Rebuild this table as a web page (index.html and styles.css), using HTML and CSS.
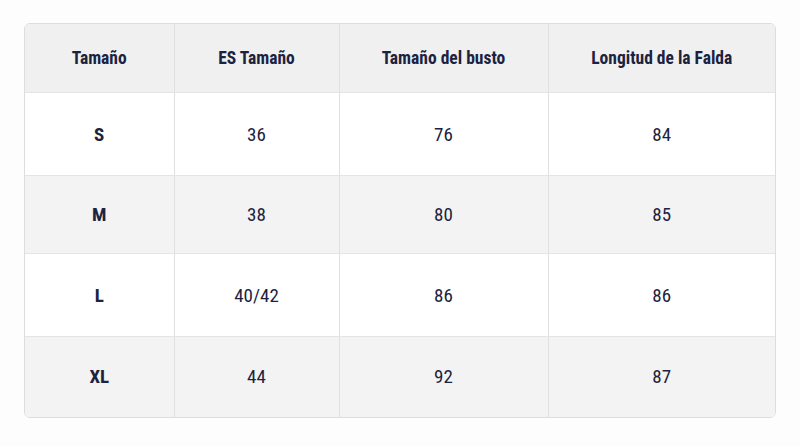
FILE: index.html
```html
<!DOCTYPE html>
<html lang="es">
<head>
<meta charset="utf-8">
<link rel="stylesheet" href="styles.css">
</head>
<body>
<div class="page">
  <div class="card">
    <table class="sizes">
      <colgroup>
        <col class="c1"><col class="c2"><col class="c3"><col class="c4">
      </colgroup>
      <thead>
        <tr class="head">
          <th>Tamaño</th><th>ES Tamaño</th><th>Tamaño del busto</th><th>Longitud de la Falda</th>
        </tr>
      </thead>
      <tbody>
        <tr class="r1"><th>S</th><td>36</td><td>76</td><td>84</td></tr>
        <tr class="r2 alt"><th>M</th><td>38</td><td>80</td><td>85</td></tr>
        <tr class="r3"><th>L</th><td>40/42</td><td>86</td><td>86</td></tr>
        <tr class="r4 alt"><th>XL</th><td>44</td><td>92</td><td>87</td></tr>
      </tbody>
    </table>
  </div>
</div>
</body>
</html>
```

FILE: styles.css
```css
html, body {
  margin: 0;
  padding: 0;
  background: #fdfdfd;
}
.page {
  padding: 23px 24px 0 24px;
}
.card {
  width: 750px;
  border: 1px solid #dddddd;
  border-radius: 6px;
  overflow: hidden;
  background: #ffffff;
}
.sizes {
  width: 100%;
  border-collapse: collapse;
  table-layout: fixed;
  font-family: "Roboto Condensed", Roboto, "Liberation Sans", sans-serif;
  font-stretch: 80%;
  color: #1b2340;
}
.c1 { width: 149px; }
.c2 { width: 165px; }
.c3 { width: 209px; }
.c4 { width: auto; }
.sizes th, .sizes td {
  text-align: center;
  vertical-align: middle;
  border-right: 1px solid #e0e0e0;
  border-bottom: 1px solid #e4e4e4;
  padding: 0;
}
.sizes th:last-child, .sizes td:last-child {
  border-right: none;
}
.sizes tbody tr:last-child th, .sizes tbody tr:last-child td {
  border-bottom: none;
}
.head th {
  background: #f0f0f0;
  font-size: 17.5px;
  font-weight: 700;
  height: 68px;
}
.sizes tbody th {
  font-size: 19px;
  font-weight: 700;
}
.sizes tbody td {
  font-size: 19px;
  font-weight: 400;
  font-stretch: 84%;
}
.r1 { height: 83px; }
.r2 { height: 78px; }
.r3 { height: 83px; }
.r4 { height: 80px; }
.alt th, .alt td {
  background: #f3f3f3;
}
```
